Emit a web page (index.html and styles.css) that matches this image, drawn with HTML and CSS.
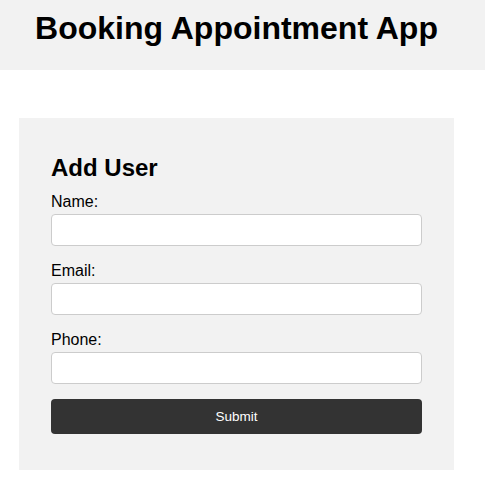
FILE: index.html
```html
<!DOCTYPE html>
<html>
<head>
<meta charset="utf-8">
<link rel="stylesheet" href="styles.css">
</head>
<body>
<header class="header">
  <h1 class="title">Booking Appointment App</h1>
</header>
<main class="card">
  <h2 class="card-title">Add User</h2>
  <form class="form">
    <label class="label" for="name">Name:</label>
    <input class="input" id="name" type="text">
    <label class="label" for="email">Email:</label>
    <input class="input" id="email" type="email">
    <label class="label" for="phone">Phone:</label>
    <input class="input" id="phone" type="tel">
    <button class="submit" type="button">Submit</button>
  </form>
</main>
</body>
</html>
```
FILE: styles.css
```css
* { box-sizing: border-box; }
body {
  margin: 0;
  font-family: "Liberation Sans", Arial, sans-serif;
  color: #000;
  background: #fff;
}
.header {
  background: #f2f2f2;
  height: 70px;
  display: flex;
  align-items: center;
  justify-content: center;
  padding: 0 12px 14px 0;
}
.title {
  margin: 0;
  font-size: 32px;
  font-weight: bold;
}
.card {
  margin: 48px 31px 0 19px;
  background: #f2f2f2;
  padding: 36px 32px 36px 32px;
}
.card-title {
  margin: 0 0 12px 0;
  font-size: 24px;
  font-weight: bold;
  line-height: 27px;
}
.form {
  display: flex;
  flex-direction: column;
}
.label {
  display: block;
  font-size: 16px;
  line-height: 18px;
  margin-bottom: 3px;
}
.input {
  display: block;
  width: 100%;
  height: 32px;
  margin: 0 0 16px 0;
  border: 1px solid #ccc;
  border-radius: 4px;
  background: #fff;
  font: inherit;
  padding: 0 8px;
}
.input:last-of-type {
  margin-bottom: 15px;
}
.submit {
  height: 35px;
  width: 100%;
  border: none;
  border-radius: 4px;
  background: #333;
  color: #fff;
  font-family: "Liberation Sans", Arial, sans-serif;
  font-size: 13.5px;
}
```
